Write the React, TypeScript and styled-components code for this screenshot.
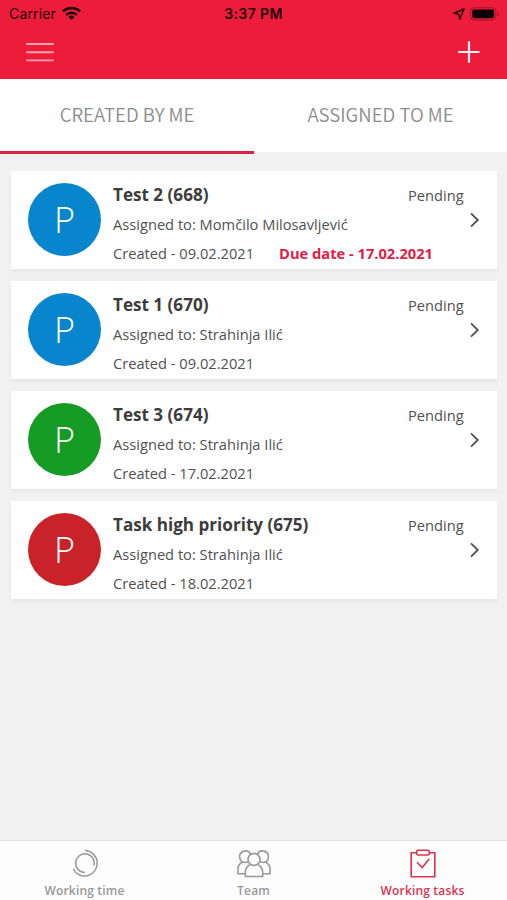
import React from "react";
import styled, { createGlobalStyle } from "styled-components";

const GlobalStyle = createGlobalStyle`
  *, *::before, *::after { box-sizing: border-box; }
  body { margin: 0; background: #f1f1f1; }
  svg { display: block; flex: none; }
  button { border: 0; padding: 0; background: none; font: inherit; color: inherit; cursor: pointer; }
`;

const Screen = styled.div`
  width: 507px;
  height: 900px;
  display: flex;
  flex-direction: column;
  overflow: hidden;
  background: #f1f1f1;
  font-family: "Open Sans", "Noto Sans", sans-serif;
  color: #515151;
`;

const Header = styled.header`
  height: 79px;
  flex: none;
  background: #ed1c3b;
`;

const StatusBar = styled.div`
  height: 27px;
  display: grid;
  grid-template-columns: 1fr auto 1fr;
  align-items: center;
  padding: 0 7px 0 9px;
  color: #23040a;
  font: 400 14px/27px Inter, sans-serif;
`;

const StatusGroup = styled.div<{ $end?: boolean }>`
  display: flex;
  align-items: center;
  gap: ${(p) => (p.$end ? 5 : 6)}px;
  justify-content: ${(p) => (p.$end ? "flex-end" : "flex-start")};
`;

const Carrier = styled.span`
  letter-spacing: 0.15px;
`;

const Clock = styled.span`
  font-weight: 600;
  letter-spacing: 0.4px;
  margin-right: 2px;
`;

const Toolbar = styled.div`
  height: 50px;
  display: flex;
  align-items: center;
  justify-content: space-between;
  padding: 0 27px 0 26px;
`;

const Tabs = styled.nav`
  height: 76px;
  flex: none;
  display: grid;
  grid-template-columns: 254px 253px;
`;

const Tab = styled.button<{ $active?: boolean }>`
  position: relative;
  height: 73px;
  background: #fff;
  color: #8c8c8c;
  font-family: "Noto Sans CJK SC", "Noto Sans", sans-serif;
  font-size: 18.6px;
  font-weight: 350;
  line-height: 69px;
  padding-bottom: 4px;
  text-align: center;

  &::after {
    content: "";
    display: ${(p) => (p.$active ? "block" : "none")};
    position: absolute;
    left: 0;
    right: 0;
    bottom: -2px;
    height: 3px;
    background: #dc2344;
  }
`;

const List = styled.main`
  flex: 1;
  display: flex;
  flex-direction: column;
  gap: 12px;
  padding: 16px 10px 0 11px;
`;

const Card = styled.article`
  height: 98px;
  display: flex;
  background: #fff;
  box-shadow: 0 3px 3px rgba(0, 0, 0, 0.04);
  padding-left: 17px;
`;

const Avatar = styled.div<{ $color: string }>`
  width: 73px;
  height: 73px;
  margin-top: 12px;
  flex: none;
  border-radius: 50%;
  background: ${(p) => p.$color};
  color: #fff;
  font-size: 36px;
  font-weight: 350;
  line-height: 74px;
  text-align: center;
`;

const Details = styled.div`
  flex: 1;
  min-width: 0;
  margin-left: 12px;
  padding-top: 10px;
  white-space: nowrap;
`;

const Title = styled.h2`
  margin: 0;
  color: #3c3c3c;
  font-size: 17.1px;
  font-weight: 700;
  line-height: 28px;
`;

const Line = styled.div`
  display: flex;
  gap: 25px;
  font-size: 14.67px;
  line-height: 29px;
  height: 29px;
  padding-top: 1px;
`;

const DueDate = styled.strong`
  color: #de2044;
  font-weight: 700;
`;

const Aside = styled.div`
  width: 89px;
  flex: none;
  display: flex;
  flex-direction: column;
  padding-top: 10px;
`;

const Status = styled.span`
  font-size: 14.67px;
  line-height: 28px;
`;

const Chevron = styled.svg`
  margin: 3px 0 0 62px;
`;

const BottomNav = styled.nav`
  height: 60px;
  flex: none;
  display: grid;
  grid-template-columns: repeat(3, 1fr);
  background: #fdfdfd;
  border-top: 1px solid #dfdfdf;
`;

const NavItem = styled.button<{ $active?: boolean }>`
  display: flex;
  flex-direction: column;
  align-items: center;
  padding-top: 8px;
  color: ${(p) => (p.$active ? "#dc3351" : "#999")};
`;

const NavLabel = styled.span`
  margin-top: 4px;
  font-size: 12px;
  font-weight: 600;
  letter-spacing: 0.17px;
  line-height: 18px;
`;

const WifiIcon = () => (
  <svg width="19" height="15" viewBox="0 0 19 15" fill="none" stroke="#160207" strokeWidth="2.5">
    <path d="M1 5.4a12.3 12.3 0 0 1 17 0" />
    <path d="M4.1 8.8a7.8 7.8 0 0 1 10.8 0" />
    <path d="M9.5 14 6.5 11a4.3 4.3 0 0 1 6 0z" fill="#160207" stroke="none" />
  </svg>
);

const LocationIcon = () => (
  <svg width="12" height="12" viewBox="0 0 12 12" fill="none" stroke="#30060e" strokeWidth="1.6" strokeLinejoin="round">
    <path d="M11 1 1 5.3l4.7.9L6.8 11z" />
  </svg>
);

const BatteryIcon = () => (
  <svg width="30" height="14" viewBox="0 0 30 14">
    <rect x=".6" y=".8" width="25.2" height="12.2" rx="3.6" fill="none" stroke="#a0142a" />
    <rect x="2.3" y="2.5" width="21.8" height="8.8" rx="2" fill="#080002" />
    <path d="M27.3 5v4q1.5-.5 1.5-2t-1.5-2" fill="#a0142a" />
  </svg>
);

const MenuIcon = () => (
  <svg width="28" height="20" viewBox="0 0 28 20" stroke="#ffa3b2" strokeWidth="1.9">
    <path d="M.3 2h27.4M.3 10.2h27.4M.3 18.4h27.4" />
  </svg>
);

const PlusIcon = () => (
  <svg width="22" height="22" viewBox="0 0 22 22" stroke="#fff1f3" strokeWidth="2.2">
    <path d="M11 .2v21.6M.2 11h21.6" />
  </svg>
);

const TimeIcon = () => (
  <svg width="28" height="29" viewBox="0 0 28 29" fill="none" stroke="currentColor" strokeWidth="1.5">
    <path d="M14 1.6a12.7 12.7 0 1 1-11.8 18.4" />
    <path d="M14 23.4A9.3 9.3 0 1 1 22.9 16.5" />
  </svg>
);

const TeamIcon = () => (
  <svg width="34" height="29" viewBox="0 0 34 29" fill="none" stroke="currentColor" strokeWidth="1.6">
    <path d="M13.7 5.3A5.8 5.8 0 1 0 8 13.5q1.8 0 3.3-.7M20.3 5.3a5.8 5.8 0 1 1 5.7 8.2q-1.8 0-3.3-.7" />
    <path d="M5.4 13.2Q1 15.2 1 20v4.7h7.2M28.6 13.2Q33 15.2 33 20v4.7h-7.2" />
    <circle cx="17" cy="10.4" r="6" />
    <path d="M12.8 15.8q-4.5 2.7-4.5 7.7v4h17.4v-4q0-5-4.5-7.7" />
  </svg>
);

const TasksIcon = () => (
  <svg width="26" height="29" viewBox="0 0 26 29" fill="none" stroke="currentColor" strokeWidth="1.6">
    <path d="M6.5 3.8H1.2v24h23.6v-24h-5.3" />
    <rect x="6.7" y="1.2" width="12.6" height="4.8" rx="1.3" />
    <path d="m7 13.2 5.2 5.3 7-8.5" />
  </svg>
);

interface Task {
  title: string;
  assignee: string;
  created: string;
  due?: string;
  color: string;
}

const tasks: Task[] = [
  { title: "Test 2 (668)", assignee: "Momčilo Milosavljević", created: "09.02.2021", due: "17.02.2021", color: "#0785cd" },
  { title: "Test 1 (670)", assignee: "Strahinja Ilić", created: "09.02.2021", color: "#0785cd" },
  { title: "Test 3 (674)", assignee: "Strahinja Ilić", created: "17.02.2021", color: "#169b24" },
  { title: "Task high priority (675)", assignee: "Strahinja Ilić", created: "18.02.2021", color: "#c92228" },
];

const TaskCard = ({ task }: { task: Task }) => (
  <Card>
    <Avatar $color={task.color}>P</Avatar>
    <Details>
      <Title>{task.title}</Title>
      <Line>Assigned to: {task.assignee}</Line>
      <Line>
        <span>Created - {task.created}</span>
        {task.due && <DueDate>Due date - {task.due}</DueDate>}
      </Line>
    </Details>
    <Aside>
      <Status>Pending</Status>
      <Chevron width="10" height="16" viewBox="0 0 10 16" fill="none" stroke="#515151" strokeWidth="1.8">
        <path d="m1 1.3 6.8 6.7L1 14.7" />
      </Chevron>
    </Aside>
  </Card>
);

export default function App() {
  return (
    <>
      <GlobalStyle />
      <Screen>
        <Header>
          <StatusBar>
            <StatusGroup>
              <Carrier>Carrier</Carrier>
              <WifiIcon />
            </StatusGroup>
            <Clock>3:37 PM</Clock>
            <StatusGroup $end>
              <LocationIcon />
              <BatteryIcon />
            </StatusGroup>
          </StatusBar>
          <Toolbar>
            <button aria-label="Menu"><MenuIcon /></button>
            <button aria-label="Add task"><PlusIcon /></button>
          </Toolbar>
        </Header>
        <Tabs>
          <Tab $active>CREATED BY ME</Tab>
          <Tab>ASSIGNED TO ME</Tab>
        </Tabs>
        <List>
          {tasks.map((task) => <TaskCard key={task.title} task={task} />)}
        </List>
        <BottomNav>
          <NavItem><TimeIcon /><NavLabel>Working time</NavLabel></NavItem>
          <NavItem><TeamIcon /><NavLabel>Team</NavLabel></NavItem>
          <NavItem $active><TasksIcon /><NavLabel>Working tasks</NavLabel></NavItem>
        </BottomNav>
      </Screen>
    </>
  );
}
